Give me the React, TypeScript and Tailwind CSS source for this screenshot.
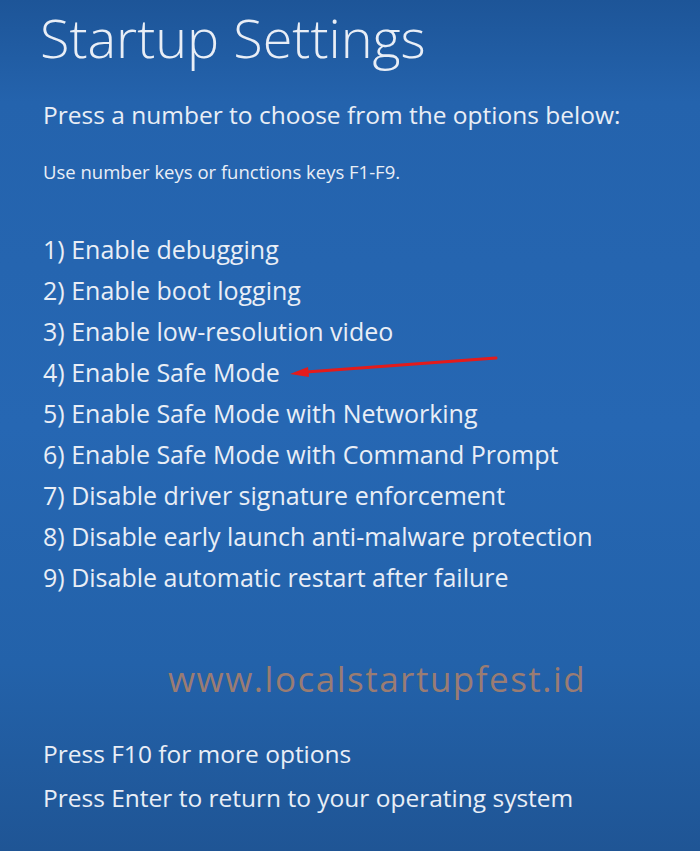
import React from "react";

const items = [
  "1) Enable debugging",
  "2) Enable boot logging",
  "3) Enable low-resolution video",
  "4) Enable Safe Mode",
  "5) Enable Safe Mode with Networking",
  "6) Enable Safe Mode with Command Prompt",
  "7) Disable driver signature enforcement",
  "8) Disable early launch anti-malware protection",
  "9) Disable automatic restart after failure",
];

export default function App() {
  return (
    <div
      className="relative w-[700px] h-[851px] overflow-hidden bg-[linear-gradient(180deg,#1d5598_0%,#2463ad_12%,#2667b3_50%,#2362aa_78%,#1f5595_100%)] text-[#e9eef6]"
      style={{ fontFamily: '"Open Sans", "Noto Sans", sans-serif' }}
    >
      <div className="flex flex-col pl-[40px]">
        <h1 className="text-[54px] font-light leading-[74px]">Startup Settings</h1>
        <p className="text-[24.5px] leading-none mt-[29px] ml-[3px]">
          Press a number to choose from the options below:
        </p>
        <p className="text-[18.5px] leading-none mt-[35px] ml-[3px]">
          Use number keys or functions keys F1-F9.
        </p>
        <ul className="flex flex-col mt-[53px] ml-[3px] gap-[11px]">
          {items.map((t) => (
            <li key={t} className="text-[25px] leading-[30px]">
              {t}
            </li>
          ))}
        </ul>
        <div className="text-[35px] leading-none mt-[69px] ml-[128px] text-[#9a7c73] tracking-[1.5px]">
          www.localstartupfest.id
        </div>
        <p className="text-[24.5px] leading-none mt-[46px] ml-[3px]">Press F10 for more options</p>
        <p className="text-[24.5px] leading-none mt-[19px] ml-[3px]">
          Press Enter to return to your operating system
        </p>
      </div>
      <svg
        className="absolute left-[286px] top-[354px]"
        width="214"
        height="26"
        viewBox="0 0 214 26"
      >
        <line x1="210" y1="4" x2="20" y2="18" stroke="#e41b1b" strokeWidth="3" strokeLinecap="round" />
        <polygon points="4,20 22,13 23,23" fill="#e41b1b" />
      </svg>
    </div>
  );
}
